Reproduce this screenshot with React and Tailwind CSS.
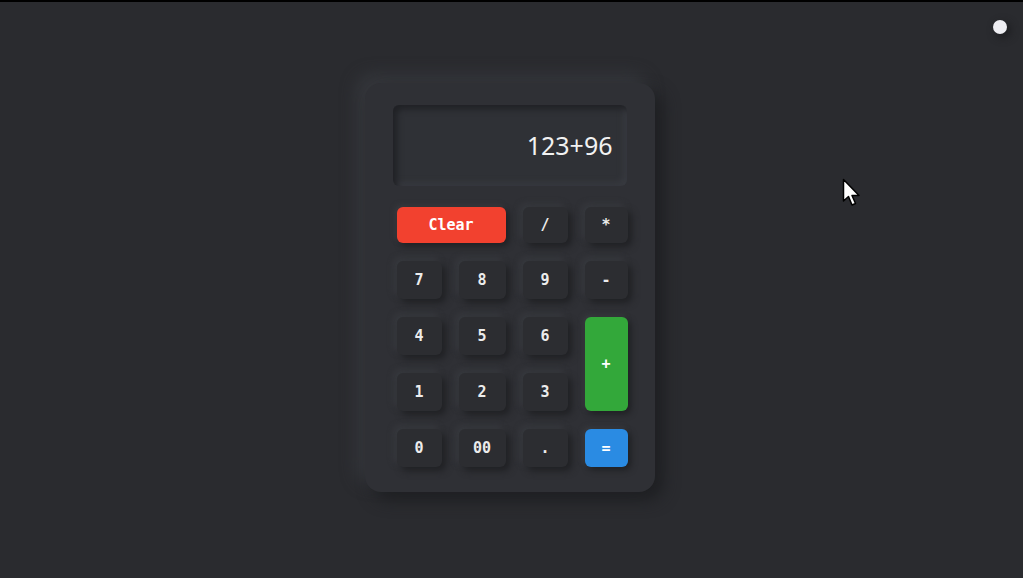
export default function App() {
  const keys = [
    { label: "Clear", cls: "col-span-2 bg-[#f2412f] text-white shadow-[3px_3px_6px_#1f2023,-2px_-2px_5px_#3a3c41]" },
    { label: "/" },
    { label: "*" },
    { label: "7" },
    { label: "8" },
    { label: "9" },
    { label: "-" },
    { label: "4" },
    { label: "5" },
    { label: "6" },
    { label: "+", cls: "row-span-2 bg-[#33a83a] text-white shadow-[3px_3px_6px_#1f2023,-2px_-2px_5px_#3a3c41]" },
    { label: "1" },
    { label: "2" },
    { label: "3" },
    { label: "0" },
    { label: "00" },
    { label: "." },
    { label: "=", cls: "bg-[#2a8be3] text-white shadow-[3px_3px_6px_#1f2023,-2px_-2px_5px_#3a3c41]" },
  ];

  return (
    <div className="relative h-[578px] w-full overflow-hidden bg-[#2a2b2f] font-['DejaVu_Sans_Mono',monospace]">
      {/* top strip */}
      <div className="h-[2px] bg-black" />

      <div className="flex h-[576px] items-center justify-center">
        {/* calculator body */}
        <div className="ml-[-4px] mt-[-5px] flex w-[290px] flex-col rounded-[16px] bg-[#2f3035] px-[28px] pb-[25px] pt-[22px] shadow-[8px_8px_16px_#1e1f22,-8px_-8px_16px_#36383d]">
          {/* display */}
          <div className="flex h-[81px] items-center justify-end rounded-[6px] bg-[#2f3136] pr-[14px] shadow-[inset_4px_4px_6px_#202125,inset_-3px_-3px_6px_#3a3c42]">
            <span className="font-['Noto_Sans',sans-serif] text-[25px] text-[#f2f2f2]">123+96</span>
          </div>

          {/* keypad */}
          <div className="mt-[21px] grid grid-cols-[45px_47px_45px_43px] grid-rows-[36px_38px_38px_38px_38px] gap-x-[17px] gap-y-[18px] pl-[4px]">
            {keys.map((k) => (
              <button
                key={k.label}
                className={`flex items-center justify-center rounded-[6px] text-[15px] font-bold ${
                  k.cls ||
                  "bg-[#2c2d31] text-[#ececec] shadow-[4px_4px_7px_#202124,-3px_-3px_6px_#383a3f]"
                }`}
              >
                {k.label}
              </button>
            ))}
          </div>
        </div>
      </div>

      {/* dot */}
      <div className="absolute left-[993px] top-[20px] h-[14px] w-[14px] rounded-full bg-[#eeeef2] shadow-[3px_3px_8px_#1a1a1d]" />

      {/* cursor */}
      <svg className="absolute left-[842px] top-[178px]" width="20" height="30" viewBox="0 0 20 30">
        <path d="M1.5 1.5 L1.5 23 L6.5 18.5 L10 27 L13.5 25.5 L10 17.5 L17 17.5 Z" fill="#ffffff" stroke="#000000" strokeWidth="1.5" strokeLinejoin="round" />
      </svg>
    </div>
  );
}
